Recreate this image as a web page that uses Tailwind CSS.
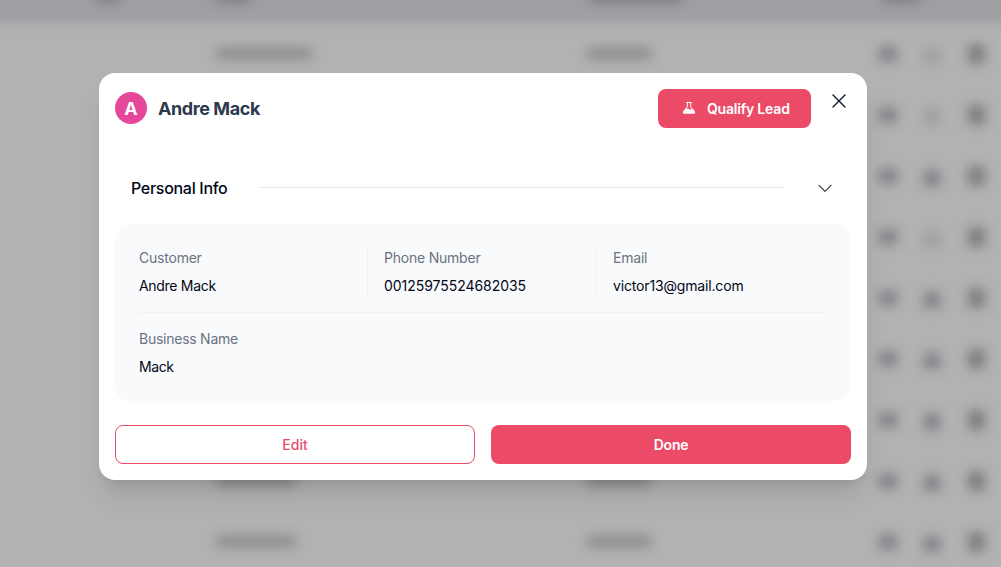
<!DOCTYPE html>
<html lang="en">
<head>
<meta charset="utf-8">
<title>Lead details</title>
<script src="https://cdn.jsdelivr.net/npm/@tailwindcss/browser@4"></script>
</head>
<body class="relative h-[567px] w-[1001px] overflow-hidden bg-white font-['Inter','Liberation_Sans',sans-serif] text-[#020617]">
  <!-- Leads table behind the dialog, bled past the window edges so the blur stays even -->
  <div aria-hidden="true" class="h-[567px] overflow-hidden">
  <div class="-mx-10 -mt-10 h-[650px] overflow-hidden bg-white px-10 blur-[6px]">
    <div class="-mx-10 flex h-[63px] items-start bg-[#e2e4e9] px-10 pt-[30px]">
      <div class="ml-[97px] h-[12px] w-[22px] bg-[#b0b1ba]"></div>
      <div class="ml-[96px] h-[12px] w-[36px] bg-[#b0b1ba]"></div>
      <div class="ml-[338px] h-[12px] w-[94px] bg-[#b0b1ba]"></div>
      <div class="ml-[199px] h-[12px] w-[38px] bg-[#b0b1ba]"></div>
    </div>
    <div id="rows"></div>
  </div>
  </div>
  <template id="row">
    <div class="flex h-[61px] items-center border-b border-[#fafafa] pt-px">
      <div class="w-[215px]"></div>
      <div class="w-[371px]"><div data-phone class="h-[13px] rounded-md bg-[#cbcdd0]"></div></div>
      <div class="w-[291px]"><div class="h-[13px] w-[66px] rounded-md bg-[#cbcdd0]"></div></div>
      <div class="flex w-[22px] justify-center"><div class="h-[16px] w-[20px] rounded-md bg-[#b8bcc2]"></div></div>
      <div class="ml-[22px] flex w-[22px] justify-center pt-1"><div data-user class="h-[17px] w-[18px] rounded-t-lg bg-[#b8bcc2]"></div></div>
      <div class="ml-[22px] flex w-[22px] justify-center"><div class="h-[20px] w-[17px] rounded-sm bg-[#b0b4b9]"></div></div>
    </div>
  </template>

  <!-- Dialog overlay -->
  <div class="absolute inset-0 bg-black/30 pl-[99px] pt-[73px]">
    <div class="flex h-[407px] w-[768px] flex-col rounded-2xl bg-white p-4 shadow-[0_20px_25px_-5px_rgb(0_0_0/0.1),0_8px_10px_-6px_rgb(0_0_0/0.1)]">
      <div class="flex h-[39px]">
        <div class="flex h-[38px] flex-1 items-center gap-3">
          <div class="flex size-8 items-center justify-center rounded-full bg-[#e5479b] pt-px text-lg font-bold text-white">A</div>
          <h2 class="-ml-px pt-0.5 text-lg font-bold tracking-[-0.42px] text-[#2f394c]">Andre Mack</h2>
        </div>
        <button class="flex h-[39px] w-[153px] items-center rounded-lg bg-[#eb4b67] pl-[24px] text-sm font-semibold tracking-[-0.2px] text-white">
          <svg class="mb-px mr-[11px] h-[14px] w-[14px] shrink-0" viewBox="0 0 14 14" fill="none" stroke="currentColor">
            <path d="M4.300 1.500h5.400M5.300 1.500v4.400L3.100 8.800M8.700 1.500v4.400l2.200 2.900" stroke-width="1"/>
            <path d="M3.100 8c1.400-.7 2.600-.4 3.900.1 1.300.5 2.500.3 3.800-.3l2 2.400c.9 1.300.3 2.500-1.100 2.500H2.300c-1.400 0-2-1.200-1.100-2.500z" fill="currentColor" stroke="none"/>
          </svg>
          Qualify Lead
        </button>
        <button aria-label="Close" class="ml-[21px] mr-[5px] mt-[5px] flex size-[14px] items-center justify-center">
          <svg class="size-[14px]" viewBox="0 0 14 14" fill="none" stroke="#0f172a" stroke-width="1.400" stroke-linecap="round"><path d="M1 1l12 12M13 1L1 13"/></svg>
        </button>
      </div>

      <div class="mt-12 flex h-6 items-center pl-4 pr-[18px]">
        <h3 class="w-[128px] text-base font-medium tracking-[-0.3px]">Personal Info</h3>
        <div class="mb-px h-px w-[524px] bg-[#e2e4e8]"></div>
        <svg class="ml-auto h-[14px] w-[16px]" viewBox="0 0 16 14" fill="none" stroke="#333333" stroke-width="1.1" stroke-linecap="round" stroke-linejoin="round"><path d="M2 4.300l6 6 6-6"/></svg>
      </div>

      <div class="mt-6 h-[177px] rounded-2xl bg-[#f9fafc] p-6 text-sm tracking-[-0.22px]">
        <div class="flex h-[65px] border-b border-[#f1f2f4]">
          <div class="flex h-12 w-[229px] flex-col gap-2 border-r border-[#f1f2f4]">
            <span class="text-[#6b7280]">Customer</span><span class="tracking-[-0.3px]">Andre Mack</span>
          </div>
          <div class="flex h-12 w-[229px] flex-col gap-2 border-r border-[#f1f2f4] pl-4">
            <span class="text-[#6b7280]">Phone Number</span><span class="tracking-[-0.05px]">00125975524682035</span>
          </div>
          <div class="flex h-12 flex-col gap-2 pl-4">
            <span class="text-[#6b7280]">Email</span><span class="tracking-[-0.16px]">victor13@gmail.com</span>
          </div>
        </div>
        <div class="flex flex-col gap-2 pt-4">
          <span class="tracking-[-0.25px] text-[#6b7280]">Business Name</span><span class="tracking-[-0.4px]">Mack</span>
        </div>
      </div>

      <div class="mt-6 grid grid-cols-2 gap-4 text-sm font-medium">
        <button class="h-[39px] rounded-lg border border-[#eb4b67] text-[#eb4b67]">Edit</button>
        <button class="h-[39px] rounded-lg bg-[#eb4b67] font-semibold tracking-[-0.2px] text-white">Done</button>
      </div>
    </div>
  </div>

  <script>
    // Each entry: width of the phone placeholder, opacity of the user icon.
    const rows = [[98, .4], [90, .4], [90, 1], [90, .4], [90, 1], [90, 1], [90, 1], [82, 1], [82, 1]];
    for (const [width, opacity] of rows) {
      const node = document.getElementById('row').content.cloneNode(true);
      node.querySelector('[data-phone]').style.width = width + 'px';
      node.querySelector('[data-user]').style.opacity = opacity;
      document.getElementById('rows').append(node);
    }
  </script>
</body>
</html>
